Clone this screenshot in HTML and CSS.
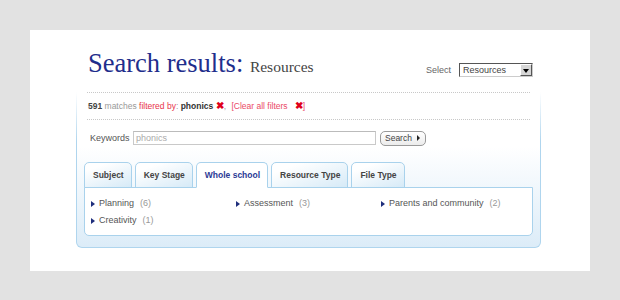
FILE: index.html
```html
<!DOCTYPE html>
<html>
<head>
	<title>Search results</title>
	<meta charset="utf-8">
	<link rel="stylesheet" href="styles.css">
</head>
<body>
	<div class="page">
		<div class="head">
			<h1 class="title">Search results: <span class="sub">Resources</span></h1>
			<div class="picker">
				<span class="picker-label">Select</span>
				<div class="select">
					<span class="select-text">Resources</span>
					<span class="select-btn"><i></i></span>
				</div>
			</div>
		</div>
		<div class="box-edge">
			<div class="box">
				<div class="filters">
					<b class="count">591</b> <span class="muted">matches</span>
					<span class="red">filtered by</span><span class="muted">:</span>
					<b class="term">phonics</b> <b class="x">✖</b><span class="muted">,</span>
					<a class="clear">[Clear all filters &nbsp;&nbsp;<b class="x">✖</b>]</a>
				</div>
				<div class="keywords">
					<label class="kw-label">Keywords</label>
					<div class="kw-input">phonics</div>
					<div class="kw-btn">Search <i></i></div>
				</div>
				<ul class="tabs">
					<li class="tab">Subject</li>
					<li class="tab">Key Stage</li>
					<li class="tab active">Whole school</li>
					<li class="tab">Resource Type</li>
					<li class="tab">File Type</li>
				</ul>
				<div class="panel">
					<div class="item"><i></i>Planning <span class="num">(6)</span></div>
					<div class="item"><i></i>Assessment <span class="num">(3)</span></div>
					<div class="item"><i></i>Parents and community <span class="num">(2)</span></div>
					<div class="item"><i></i>Creativity <span class="num">(1)</span></div>
				</div>
			</div>
		</div>
	</div>
</body>
</html>
```

FILE: styles.css
```css
*{margin:0;padding:0;list-style:none;box-sizing:border-box;}
body{background:#e2e2e2;font-family:"Liberation Sans",Arial,sans-serif;font-size:9px;color:#555;}
.page{width:560px;height:241px;margin:30px 0 0 30px;background:#fff;padding-top:18px;}

/* header */
.head{display:flex;justify-content:space-between;align-items:flex-end;padding:0 57px 0 58px;}
.title{font-family:"Liberation Serif","Times New Roman",serif;font-weight:normal;font-size:26.5px;line-height:30px;color:#1f2e8c;}
.title .sub{font-size:15.5px;color:#444;}
.picker{display:flex;align-items:center;gap:8px;margin-bottom:5px;}
.picker-label{color:#666;font-size:9px;}
.select{display:flex;width:74px;height:14px;border:1px solid;border-color:#555 #ccc #ccc #555;background:#fff;}
.select-text{flex:1;color:#444;line-height:12px;padding-left:3px;font-size:9px;}
.select-btn{width:12px;background:#d6d6d6;border:1px solid;border-color:#fff #555 #555 #fff;display:flex;align-items:center;justify-content:center;}
.select-btn i{border:3px solid transparent;border-top:4px solid #000;border-bottom:0;margin-top:1px;}

/* results box */
.box-edge{margin:10px 0 0 46px;width:465px;padding:0 1px 1px;border-radius:0 0 6px 6px;background:linear-gradient(to bottom,rgba(170,210,236,0) 0,#afd5ee 50px,#afd5ee 100%);}
.box{height:155px;padding:0 10px 0 10px;border-radius:0 0 5px 5px;background:linear-gradient(to bottom,#fff 0,#fff 35%,#dcecf8 100%);}
.filters{height:28px;line-height:26px;border-top:1px dotted #c8c8c8;border-bottom:1px dotted #c8c8c8;padding-left:1px;color:#444;font-size:8.5px;}
.filters .count{color:#444;}
.muted{color:#999;}
.red{color:#e8334a;}
.term{color:#333;}
.x{color:#e0001b;font-size:9.5px;}
.clear{color:#ea4a66;margin-left:3px;}
.keywords{display:flex;align-items:center;margin-top:11px;height:14px;padding-left:3px;}
.kw-label{color:#555;width:43px;}
.kw-input{width:243px;height:14px;border:1px solid #c9c9c9;border-top-color:#bbb;background:#fff;color:#aaa;line-height:12px;padding-left:2px;}
.kw-btn{margin-left:4px;width:46px;height:15px;border:1px solid #9a9a9a;border-radius:5px;background:linear-gradient(#fff,#ececec);color:#444;font-size:8.5px;line-height:13px;padding:0 5px 0 4px;display:flex;align-items:center;justify-content:space-between;}
.kw-btn i{border:3px solid transparent;border-left:3px solid #222;border-right:0;}

/* tabs */
.tabs{display:flex;gap:3px;margin:17px 0 -1px -3px;position:relative;z-index:1;}
.tab{height:26px;line-height:24px;padding:0 7px 0 8px;border:1px solid #a9d2ec;border-radius:5px 5px 0 0;background:linear-gradient(160deg,#fff 20%,#d6eaf7 100%);color:#444;font-weight:bold;font-size:8.5px;}
.tab.active{background:#fff;border-bottom-color:#fff;color:#2b3a95;}
.panel{margin:0 -3px 0 -3px;height:49px;border:1px solid #a9d2ec;border-radius:0 0 5px 5px;background:#fff;display:grid;grid-template-columns:145px 145px 145px;grid-auto-rows:17px;padding:7px 0 0 6px;}
.item{line-height:17px;color:#555;display:flex;align-items:center;}
.item i{border:3px solid transparent;border-left:4px solid #1f2e7c;border-right:0;margin-right:4px;}
.item .num{color:#999;margin-left:6px;}
```
